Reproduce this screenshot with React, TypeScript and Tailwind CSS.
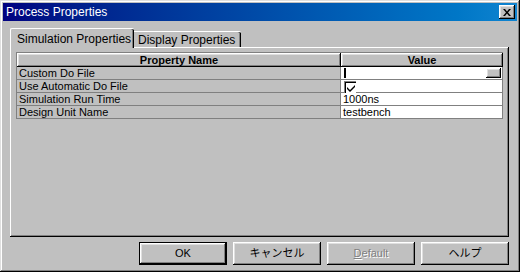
import React from "react";

const raised =
  "shadow-[inset_-1px_-1px_#000,inset_1px_1px_#fff,inset_-2px_-2px_#808080,inset_2px_2px_#dfdfdf]";
const ui = "font-['Liberation_Sans','Noto_Sans_CJK_JP',sans-serif]";

const rows = [
  { name: "Custom Do File", kind: "file" },
  { name: "Use Automatic Do File", kind: "check" },
  { name: "Simulation Run Time", kind: "text", value: "1000ns" },
  { name: "Design Unit Name", kind: "text", value: "testbench" },
];

const Btn = ({ children, isDefault = false }: { children: React.ReactNode; isDefault?: boolean }) => (
  <div className={isDefault ? "border border-black w-[88px] h-[23px]" : "w-[88px] h-[23px]"}>
    <div className={`w-full h-full flex items-center justify-center text-[11px] text-black bg-[#c0c0c0] ${raised}`}>
      {children}
    </div>
  </div>
);

const App = () => {
  return (
    <div
      className={`w-[520px] h-[272px] bg-[#c0c0c0] p-[3px] flex flex-col ${ui} shadow-[inset_-1px_-1px_#000,inset_1px_1px_#dfdfdf,inset_-2px_-2px_#808080,inset_2px_2px_#fff]`}
    >
      {/* Title bar */}
      <div className="h-[18px] bg-linear-to-r from-[#000080] to-[#1084d0] flex items-center justify-between pl-[3px] pr-[2px]">
        <span className="text-white text-[12px] leading-none">Process Properties</span>
        <div className={`w-[16px] h-[14px] bg-[#c0c0c0] ${raised} flex items-center justify-center`}>
          <svg width="8" height="7" viewBox="0 0 8 7">
            <path d="M0 0h2l2 2.5L6 0h2L5 3.5 8 7H6L4 4.5 2 7H0l3-3.5z" fill="#000" />
          </svg>
        </div>
      </div>

      <div className="flex-1 flex flex-col pl-[7px] pr-[8px] pt-[7px]">
        {/* Tabs */}
        <div className="h-[19px] flex items-end">
          <div className="relative z-10 -mb-[1px] h-[20px] w-[124px] bg-[#c0c0c0] border-l border-t border-white rounded-tl-[2px] rounded-tr-[2px] shadow-[inset_-1px_0_#000,inset_-2px_0_#808080] flex items-center pl-[6px] text-[12px] text-black">
            Simulation Properties
          </div>
          <div className="h-[16px] w-[107px] bg-[#c0c0c0] border-t border-white rounded-tr-[2px] shadow-[inset_-1px_0_#000,inset_-2px_0_#808080] flex items-center pl-[4px] text-[12px] text-black">
            Display Properties
          </div>
        </div>

        {/* Panel */}
        <div className="h-[190px] bg-[#c0c0c0] shadow-[inset_-1px_-1px_#000,inset_1px_1px_#fff,inset_-2px_-2px_#808080] pl-[6px] pt-[5px]">
          <div className="w-[487px] border-l border-t border-[#808080] text-[11px] text-black">
            <div className="grid grid-cols-[324px_162px]">
              <div className={`h-[14px] bg-[#c0c0c0] ${raised} flex items-center justify-center font-bold`}>
                Property Name
              </div>
              <div className={`h-[14px] bg-[#c0c0c0] ${raised} flex items-center justify-center font-bold`}>
                Value
              </div>
              {rows.map((r) => (
                <React.Fragment key={r.name}>
                  <div className="h-[13px] bg-[#c0c0c0] border-r border-b border-[#808080] flex items-center pl-[2px] leading-none">
                    {r.name}
                  </div>
                  <div className="h-[13px] bg-white border-r border-b border-[#808080] flex items-center pl-[2px] leading-none relative">
                    {r.kind === "file" && (
                      <>
                        <div className="w-[2px] h-[10px] bg-black ml-[1px]" />
                        <div className={`absolute right-[1px] top-[1px] w-[15px] h-[10px] bg-[#c0c0c0] ${raised}`} />
                      </>
                    )}
                    {r.kind === "check" && (
                      <div className="w-[12px] h-[12px] ml-[1px] mt-[1px] bg-white border-l border-t border-[#808080] shadow-[inset_1px_1px_#000] flex items-center justify-center pl-[1px] pt-[1px]">
                        <svg width="8" height="8" viewBox="0 0 8 8">
                          <path d="M0 3v2l3 3 5-5V1L3 6z" fill="#000" />
                        </svg>
                      </div>
                    )}
                    {r.kind === "text" && <span>{r.value}</span>}
                  </div>
                </React.Fragment>
              ))}
            </div>
          </div>
        </div>

        {/* Buttons */}
        <div className="mt-[5px] flex justify-end gap-[6px]">
          <Btn isDefault>OK</Btn>
          <Btn>キャンセル</Btn>
          <div className="w-[88px] h-[23px]">
            <div className={`w-full h-full flex items-center justify-center text-[11px] text-[#808080] bg-[#c0c0c0] ${raised} [text-shadow:1px_1px_#fff]`}>
              <span>
                <span className="underline">D</span>efault
              </span>
            </div>
          </div>
          <Btn>ヘルプ</Btn>
        </div>
      </div>
    </div>
  );
};

export default App;
